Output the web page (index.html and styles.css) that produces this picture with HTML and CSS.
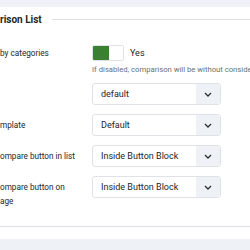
FILE: index.html
```html
<!DOCTYPE html>
<html lang="en">
<head>
  <meta charset="UTF-8" />
  <title>Comparison List</title>
  <link rel="stylesheet" href="styles.css">
</head>
<body>
  <div class="topbar"></div>
  <div class="panel">
    <div class="legend">
      <span>rison List</span>
      <div class="legend-line"></div>
    </div>

    <div class="row row-toggle">
      <label class="label">by categories</label>
      <div class="control">
        <div class="switch-line">
          <div class="switch"><span class="on"></span><span class="off"></span></div>
          <span class="switch-text">Yes</span>
        </div>
        <div class="help">If disabled, comparison will be without considering categories</div>
      </div>
    </div>

    <div class="row">
      <label class="label"></label>
      <div class="select"><span>default</span><i class="arrow"><svg width="8" height="5" viewBox="0 0 8 5"><path d="M1 1l3 3 3-3" fill="none" stroke="#2b2f33" stroke-width="1.3"/></svg></i></div>
    </div>

    <div class="row">
      <label class="label">mplate</label>
      <div class="select"><span>Default</span><i class="arrow"><svg width="8" height="5" viewBox="0 0 8 5"><path d="M1 1l3 3 3-3" fill="none" stroke="#2b2f33" stroke-width="1.3"/></svg></i></div>
    </div>

    <div class="row">
      <label class="label">ompare button in list</label>
      <div class="select"><span>Inside Button Block</span><i class="arrow"><svg width="8" height="5" viewBox="0 0 8 5"><path d="M1 1l3 3 3-3" fill="none" stroke="#2b2f33" stroke-width="1.3"/></svg></i></div>
    </div>

    <div class="row">
      <label class="label">ompare button on<br>age</label>
      <div class="select"><span>Inside Button Block</span><i class="arrow"><svg width="8" height="5" viewBox="0 0 8 5"><path d="M1 1l3 3 3-3" fill="none" stroke="#2b2f33" stroke-width="1.3"/></svg></i></div>
    </div>

    <div class="panel-end"></div>
  </div>
  <div class="bottombar"></div>
</body>
</html>
```

FILE: styles.css
```css
* {
  margin: 0;
  padding: 0;
  box-sizing: border-box;
  font-family: Roboto, sans-serif;
}
body {
  width: 250px;
  height: 250px;
  overflow: hidden;
  background: #fff;
  color: #22262a;
}
.topbar {
  height: 7px;
  background: #eef1f6;
}
.panel {
  background: #fff;
}
.legend {
  display: flex;
  align-items: center;
  height: 21px;
  padding-top: 3px;
  font-size: 10px;
  font-weight: 700;
  color: #22262a;
}
.legend-line {
  flex: 1;
  margin-left: 10px;
  border-top: 1px solid #dde1e6;
}
.row {
  display: grid;
  grid-template-columns: 92px 129px;
  align-items: start;
  margin-top: 9px;
}
.row-toggle {
  margin-top: 17px;
}
.label {
  font-size: 8.2px;
  line-height: 14px;
  padding-top: 4px;
}
.row-toggle .label {
  padding-top: 1px;
}
.switch-line {
  display: flex;
  align-items: center;
}
.switch {
  display: flex;
  width: 32px;
  height: 16px;
  border: 1px solid #dfe3e7;
  border-radius: 2px;
  overflow: hidden;
}
.switch .on {
  width: 16px;
  background: #3b7f32;
}
.switch .off {
  flex: 1;
  background: #fff;
}
.switch-text {
  margin-left: 6px;
  font-size: 9px;
}
.help {
  width: 160px;
  white-space: nowrap;
  overflow: hidden;
  font-size: 7.7px;
  color: #6b7075;
  margin-top: 4px;
}
.select {
  display: flex;
  height: 22px;
  border: 1px solid #dfe3e7;
  border-radius: 3px;
  overflow: hidden;
  font-size: 9px;
  align-items: stretch;
}
.select span {
  flex: 1;
  padding-left: 8px;
  display: flex;
  align-items: center;
}
.arrow {
  width: 24px;
  background: #eef2f7;
  display: flex;
  align-items: center;
  justify-content: center;
}
.panel-end {
  margin-top: 18px;
  border-top: 1px solid #dde1e6;
}
.bottombar {
  margin-top: 12px;
  height: 20px;
  background: #eef1f6;
}
```
